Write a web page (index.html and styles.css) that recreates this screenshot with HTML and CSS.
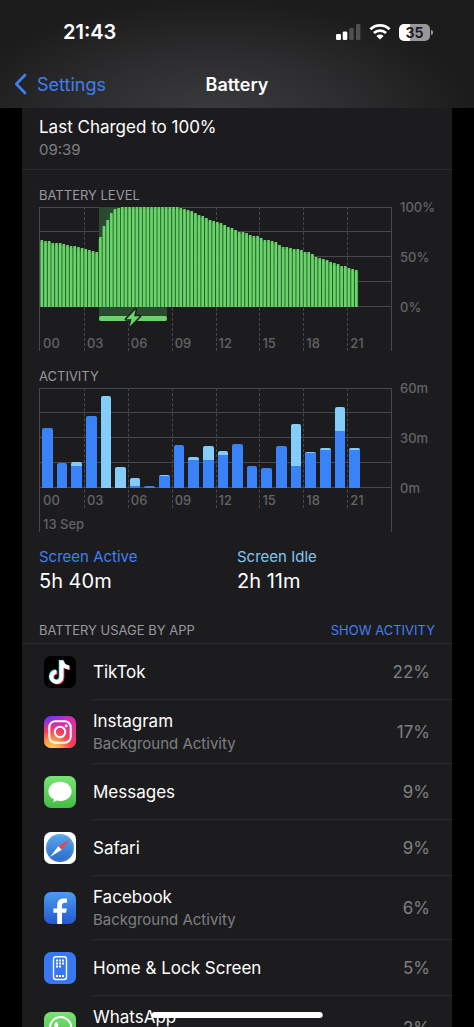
FILE: index.html
```html
<!DOCTYPE html>
<html lang="en">

<head>
    <meta charset="UTF-8">
    <meta name="viewport" content="width=device-width, initial-scale=1.0">
    <title>Battery</title>
    <link rel="stylesheet" href="styles.css">
</head>

<body>
    <div class="screen">
        <header class="header">
            <div class="status-bar">
                <span class="time">21:43</span>
                <div class="status-icons">
                    <svg width="25" height="16" viewBox="0 0 25 16" fill="#fff">
                        <rect x="0" y="10" width="5" height="6" rx="1.3" />
                        <rect x="6.7" y="7.5" width="4.6" height="8.5" rx="1.3" />
                        <rect x="13.3" y="4" width="4.4" height="12" rx="1.3" opacity=".22" />
                        <rect x="20" y="0" width="4.4" height="16" rx="1.3" opacity=".22" />
                    </svg>
                    <svg width="22" height="16" viewBox="0 0 22 16" fill="none" stroke="#fff">
                        <path d="M1.4 5.3a13.8 13.8 0 0 1 19.2 0" stroke-width="2.8" />
                        <path d="M4.9 9a8.8 8.8 0 0 1 12.2 0" stroke-width="2.7" />
                        <path d="M11 15.6 7.4 12a5.1 5.1 0 0 1 7.2 0z" fill="#fff" stroke="none" />
                    </svg>
                    <div class="battery"><span class="battery-level">35</span></div>
                </div>
            </div>
            <nav class="nav-bar">
                <a href="#" class="back">
                    <svg width="13" height="22" viewBox="0 0 13 22" fill="none" stroke="currentColor" stroke-width="2.7"
                        stroke-linecap="round" stroke-linejoin="round">
                        <path d="M11 2 2.3 11 11 20" />
                    </svg>
                    Settings
                </a>
                <h1>Battery</h1>
            </nav>
        </header>

        <main class="card">
            <section class="last-charge">
                <p class="last-title">Last Charged to 100%</p>
                <p class="sub-text">09:39</p>
            </section>

            <section class="chart-section">
                <h2>BATTERY LEVEL</h2>
                <div class="chart">
                    <div class="frame">
                        <div class="lines"></div>
                        <div class="hours">
                            <span>00</span><span>03</span><span>06</span><span>09</span><span>12</span><span>15</span><span>18</span><span>21</span>
                        </div>
                        <div class="charging">
                            <svg class="bolt" width="18" height="20" viewBox="0 0 18 20">
                                <path d="M11.6 1.5 2.2 11.300h5.300l-1.900 7.200L15.800 8.200h-5.700z" fill="#6ad36a" stroke="#1c1c1e" stroke-width="3" stroke-linejoin="round" paint-order="stroke" />
                            </svg>
                        </div>
                        <svg class="level-bars" id="levelBars" viewBox="0 0 96 100" preserveAspectRatio="none"></svg>
                    </div>
                    <div class="scale"><span>100%</span><span>50%</span><span>0%</span></div>
                </div>
            </section>

            <section class="chart-section">
                <h2>ACTIVITY</h2>
                <div class="chart">
                    <div class="frame">
                        <div class="lines"></div>
                        <div class="hours hours-short">
                            <span>00</span><span>03</span><span>06</span><span>09</span><span>12</span><span>15</span><span>18</span><span>21</span>
                        </div>
                        <div class="activity-bars" id="activityBars"></div>
                        <p class="date">13 Sep</p>
                    </div>
                    <div class="scale"><span>60m</span><span>30m</span><span>0m</span></div>
                </div>
            </section>

            <section class="totals">
                <div>
                    <p class="total-label active-color">Screen Active</p>
                    <p class="total-value">5h 40m</p>
                </div>
                <div>
                    <p class="total-label idle-color">Screen Idle</p>
                    <p class="total-value">2h 11m</p>
                </div>
            </section>

            <section>
                <div class="list-header">
                    <h2>BATTERY USAGE BY APP</h2>
                    <button type="button" class="link-btn">SHOW ACTIVITY</button>
                </div>
                <ul class="app-list">
                    <li>
                        <svg class="app-icon" viewBox="0 0 32 32">
                            <rect width="32" height="32" rx="7" fill="#000" />
                            <g fill="none" stroke-width="4">
                                <path d="M17.500 4.500v16.600a5 5 0 1 1-5-5.200M17.500 4.500c.5 4 3.400 6.800 7.700 7" stroke="#40e5df" transform="translate(-.8 -.6)" />
                                <path d="M17.500 4.500v16.600a5 5 0 1 1-5-5.200M17.500 4.500c.5 4 3.400 6.800 7.700 7" stroke="#f33b5c" transform="translate(.9 .7)" />
                                <path d="M17.500 4.500v16.600a5 5 0 1 1-5-5.200M17.500 4.500c.5 4 3.400 6.800 7.700 7" stroke="#fff" />
                            </g>
                        </svg>
                        <div class="app-row">
                            <div><p class="app-name">TikTok</p></div>
                            <span class="percent">22%</span>
                        </div>
                    </li>
                    <li class="tall">
                        <svg class="app-icon" viewBox="0 0 32 32">
                            <defs>
                                <linearGradient id="instaTop" x1=".1" y1="0" x2=".9" y2="1">
                                    <stop offset="0" stop-color="#6a35ee" />
                                    <stop offset=".4" stop-color="#d52cb4" />
                                    <stop offset="1" stop-color="#f53a62" />
                                </linearGradient>
                                <radialGradient id="instaGlow" cx=".25" cy="1.05" r=".95">
                                    <stop offset="0" stop-color="#ffd65a" />
                                    <stop offset=".3" stop-color="#ffa443" />
                                    <stop offset=".65" stop-color="#fa4250" stop-opacity=".8" />
                                    <stop offset="1" stop-color="#e62e90" stop-opacity="0" />
                                </radialGradient>
                            </defs>
                            <rect width="32" height="32" rx="7" fill="url(#instaTop)" />
                            <rect width="32" height="32" rx="7" fill="url(#instaGlow)" />
                            <g fill="none" stroke="#fff" stroke-width="2">
                                <rect x="5.300" y="5.300" width="21.400" height="21.400" rx="6" />
                                <circle cx="16" cy="16" r="5.200" />
                            </g>
                            <circle cx="22.200" cy="9.800" r="1.500" fill="#fff" />
                        </svg>
                        <div class="app-row">
                            <div>
                                <p class="app-name">Instagram</p>
                                <p class="sub-text">Background Activity</p>
                            </div>
                            <span class="percent">17%</span>
                        </div>
                    </li>
                    <li>
                        <svg class="app-icon" viewBox="0 0 32 32">
                            <defs>
                                <linearGradient id="green" x1="0" y1="0" x2="0" y2="1">
                                    <stop offset="0" stop-color="#7be276" />
                                    <stop offset="1" stop-color="#43bd43" />
                                </linearGradient>
                            </defs>
                            <rect width="32" height="32" rx="7" fill="url(#green)" />
                            <path d="M16 5.800c6.500 0 11.600 4.200 11.600 9.600S22.500 25 16 25c-1.200 0-2.300-.1-3.300-.4-1.100.9-2.300 1.400-4 1.500.8-.9 1.300-1.700 1.400-2.700C6.600 21.700 4.400 18.800 4.400 15.400c0-5.400 5.100-9.600 11.600-9.600z" fill="#fff" />
                        </svg>
                        <div class="app-row">
                            <div><p class="app-name">Messages</p></div>
                            <span class="percent">9%</span>
                        </div>
                    </li>
                    <li>
                        <svg class="app-icon" viewBox="0 0 32 32">
                            <defs>
                                <linearGradient id="compass" x1="0" y1="0" x2="0" y2="1">
                                    <stop offset="0" stop-color="#55a9ed" />
                                    <stop offset="1" stop-color="#2c68c9" />
                                </linearGradient>
                            </defs>
                            <rect width="32" height="32" rx="7" fill="#fff" />
                            <circle cx="16" cy="16" r="14" fill="url(#compass)" />
                            <circle cx="16" cy="16" r="12.600" fill="none" stroke="#a9d2f6" stroke-width="1" stroke-dasharray=".4 1.250" opacity=".7" />
                            <path d="M26 7 14.300 14.200l3.400 3.600z" fill="#e9464b" />
                            <path d="M6 25 14.300 14.200l3.400 3.600z" fill="#fff" />
                        </svg>
                        <div class="app-row">
                            <div><p class="app-name">Safari</p></div>
                            <span class="percent">9%</span>
                        </div>
                    </li>
                    <li class="tall">
                        <svg class="app-icon" viewBox="0 0 32 32">
                            <defs>
                                <linearGradient id="fbBlue" x1="0" y1="0" x2="0" y2="1">
                                    <stop offset="0" stop-color="#4a9df0" />
                                    <stop offset="1" stop-color="#2457cf" />
                                </linearGradient>
                            </defs>
                            <rect width="32" height="32" rx="7" fill="url(#fbBlue)" />
                            <path d="M13.200 32V20.800H9.400v-4.300h3.800v-3.400c0-4.400 2.300-6.700 6.300-6.700 1.300 0 2.500.1 3.500.3v4h-2.200c-2 0-2.800 1-2.800 2.800v3h4.800l-.8 4.300h-4V32z" fill="#fff" />
                        </svg>
                        <div class="app-row">
                            <div>
                                <p class="app-name">Facebook</p>
                                <p class="sub-text">Background Activity</p>
                            </div>
                            <span class="percent">6%</span>
                        </div>
                    </li>
                    <li>
                        <svg class="app-icon" viewBox="0 0 32 32">
                            <rect width="32" height="32" rx="7" fill="#3877f4" />
                            <rect x="9.500" y="4.700" width="13" height="22.800" rx="2.500" fill="none" stroke="#fff" stroke-width="1.400" />
                            <g stroke="#fff" stroke-width="2" stroke-dasharray="2 1">
                                <path d="M12 8.500h8M12 11.500h8M12 14.500h5M12 24h8" />
                            </g>
                        </svg>
                        <div class="app-row">
                            <div><p class="app-name">Home &amp; Lock Screen</p></div>
                            <span class="percent">5%</span>
                        </div>
                    </li>
                    <li class="tall">
                        <svg class="app-icon" viewBox="0 0 32 32">
                            <rect width="32" height="32" rx="7" fill="url(#green)" />
                            <path d="M6 26.500 7.500 21a10.600 10.600 0 1 1 4 3.900z" fill="none" stroke="#fff" stroke-width="2" />
                            <path d="M11.500 10.600c.6-.7 1.700-.6 2 0l1 2.400c.2.600-.9 1.500-.9 1.900.8 1.600 2 2.700 3.700 3.400.5.100 1.200-1.300 1.700-1.200l2.400 1.200c.5.300.1 2-.9 2.600-3.200 2-10.600-4-10.100-8 .1-.9.500-1.700 1.100-2.300z" fill="#fff" />
                        </svg>
                        <div class="app-row">
                            <div>
                                <p class="app-name">WhatsApp</p>
                                <p class="sub-text">Background Activity</p>
                            </div>
                            <span class="percent">2%</span>
                        </div>
                    </li>
                </ul>
            </section>
        </main>
        <div class="home-indicator"></div>
    </div>
    <script src="main.js"></script>
</body>

</html>
```
FILE: styles.css
```css
* {
    box-sizing: border-box;
}

body {
    margin: 0;
    background-color: #000;
    color: #fff;
    font-family: Inter, "Liberation Sans", sans-serif;
}

h1,
h2,
p,
ul {
    margin: 0;
    padding: 0;
}

.screen {
    display: flex;
    flex-direction: column;
    height: 100vh;
    overflow: hidden;
    position: relative;
}

/* header */
.header {
    flex: none;
    background: radial-gradient(ellipse at 45% 110%, #3c3c3e 0%, #2e2e30 35%, #1c1c1d 70%);
}

.status-bar {
    display: flex;
    justify-content: space-between;
    align-items: center;
    height: 60px;
    padding: 4px 44px 0 63px;
}

.time {
    font-size: 20px;
    font-weight: 600;
}

.status-icons {
    display: flex;
    align-items: center;
    gap: 8px;
}

.battery {
    position: relative;
    width: 31px;
    height: 17px;
    border-radius: 5px;
    background: linear-gradient(90deg, #fff 35%, #98989a 35%);
    color: #1c1c1e;
    text-align: center;
}

.battery::after {
    content: "";
    position: absolute;
    right: -3px;
    top: 6px;
    width: 2px;
    height: 5px;
    border-radius: 0 2px 2px 0;
    background-color: #98989a;
}

.battery-level {
    display: block;
    font-size: 14px;
    line-height: 17px;
    font-weight: 700;
}

.nav-bar {
    display: grid;
    grid-template-columns: 1fr auto 1fr;
    align-items: center;
    height: 48px;
    padding: 0 14px;
}

.back {
    display: flex;
    align-items: center;
    gap: 10px;
    color: #3f7ff0;
    font-size: 18px;
    text-decoration: none;
}

h1 {
    font-size: 18px;
    font-weight: 600;
}

/* card */
.card {
    flex: 1;
    min-height: 0;
    overflow: hidden;
    margin: 0 22px;
    background-color: #1c1c1e;
}

.last-charge {
    padding: 7px 17px 8px;
    border-bottom: 1px solid #2c2c2e;
}

.last-title,
.app-name {
    font-size: 17px;
    line-height: 24px;
}

.sub-text {
    color: #7f7f83;
    font-size: 15px;
    line-height: 22px;
}

h2 {
    color: #98989d;
    font-size: 13px;
    line-height: 18px;
    font-weight: 400;
}

/* charts */
.chart-section {
    padding: 16px 16px 0 17px;
}

.chart {
    display: grid;
    grid-template-columns: 1fr 44px;
    margin-top: 3px;
}

.frame {
    display: grid;
    grid-template-rows: 100px 44px;
    border-left: 1px solid #48484a;
    border-right: 1px solid #48484a;
}

.lines {
    grid-area: 1 / 1;
    border-top: 1px solid #48484a;
    background: repeating-linear-gradient(0deg, #48484a 0 1px, transparent 1px 25px);
}

.hours {
    grid-area: 1 / 1 / 3 / 2;
    display: grid;
    grid-template-columns: repeat(8, 1fr);
    color: #636366;
    font-size: 13px;
    font-weight: 500;
    line-height: 16px;
}

.hours span {
    display: flex;
    align-items: flex-end;
    padding-left: 2px;
    border-left: 1px dashed #48484a;
}

.hours span:first-child {
    border-left-color: transparent;
}

.hours-short {
    margin-bottom: 24px;
}

.level-bars {
    grid-area: 1 / 1;
    position: relative;
    width: 100%;
    height: 100px;
}

.bar-back {
    fill: #2c7233;
}

.bar {
    fill: #6ad36a;
}

.charging {
    grid-area: 1 / 1 / 3 / 2;
    position: relative;
    height: 114px;
    background-color: #2a4a2f;
}

.charging::after {
    content: "";
    position: absolute;
    left: 0;
    right: 0;
    bottom: 0;
    height: 5px;
    border-radius: 2px;
    background-color: #6ad36a;
}

.bolt {
    position: absolute;
    z-index: 1;
    left: 50%;
    bottom: -7px;
    margin-left: -9px;
}

.activity-bars {
    grid-area: 1 / 1;
    display: grid;
    grid-template-columns: repeat(24, 1fr);
    align-items: end;
    height: 100px;
}

.activity-bar {
    margin: 0 2px;
    overflow: hidden;
    display: flex;
    align-items: flex-end;
    border-radius: 2px 2px 0 0;
    background-color: #84cdfb;
}

.activity-bar div {
    width: 100%;
    background-color: #3a82f7;
}

.date {
    grid-area: 2 / 1;
    align-self: end;
    padding-left: 3px;
    color: #636366;
    font-size: 13px;
    font-weight: 500;
    line-height: 16px;
}

.scale {
    display: flex;
    flex-direction: column;
    justify-content: space-between;
    height: 116px;
    margin-top: -8px;
    padding-left: 8px;
    color: #636366;
    font-size: 13px;
    font-weight: 500;
    line-height: 16px;
}

/* totals */
.totals {
    display: grid;
    grid-template-columns: 1fr 1fr;
    padding: 15px 17px 0;
}

.total-label {
    font-size: 15px;
    line-height: 20px;
}

.total-value {
    font-size: 20px;
    line-height: 28px;
}

.active-color {
    color: #4080f0;
}

.idle-color {
    color: #84c8f0;
}

/* app list */
.list-header {
    display: flex;
    justify-content: space-between;
    align-items: center;
    padding: 26px 17px 4px;
    border-bottom: 1px solid #2c2c2e;
}

.link-btn {
    padding: 0;
    border: none;
    background: none;
    color: #4080f0;
    font-family: inherit;
    font-size: 13px;
    line-height: 18px;
    cursor: pointer;
}

.app-list {
    list-style: none;
}

.app-list li {
    display: flex;
    align-items: center;
    gap: 17px;
    height: 56px;
    padding-left: 22px;
}

.app-list li.tall {
    height: 64px;
}

.app-icon {
    flex: none;
    width: 32px;
    height: 32px;
}

.app-row {
    flex: 1;
    display: flex;
    justify-content: space-between;
    align-items: center;
    align-self: stretch;
    padding-right: 22px;
    border-bottom: 1px solid #2c2c2e;
}

.percent {
    color: #7f7f83;
    font-size: 17px;
}

.home-indicator {
    position: absolute;
    left: 50%;
    bottom: 9px;
    width: 36%;
    height: 6px;
    border-radius: 3px;
    background-color: #fff;
    transform: translateX(-50%);
}
```
FILE: main.js
```javascript
// battery level, one value per 15 minutes
var levels = [
    67, 66, 66, 64, 64, 64, 63, 62, 61, 61, 60, 59, 58, 57, 56, 55,
    70, 81, 87, 94, 98, 99, 100, 100, 100, 100, 100, 100, 100, 100, 100, 100,
    100, 100, 100, 100, 100, 100, 99, 98, 97, 96, 94, 92, 91, 89, 87, 86,
    85, 84, 82, 80, 79, 77, 75, 75, 74, 72, 71, 71, 69, 67, 67, 66,
    65, 62, 60, 60, 59, 58, 58, 57, 55, 55, 53, 50, 49, 48, 47, 45,
    44, 43, 41, 41, 39, 38, 37
];

// charging period, in 15 minute slots
var charge = { from: 16, to: 34.7 };

// minutes per hour: [screen active, total]
var activity = [
    [36, 36], [15, 15], [13, 15.5], [43, 43], [0, 55.5], [0, 12.5],
    [1, 6], [1, 1], [7, 8], [26, 26], [17, 18.5], [17, 25],
    [20, 22], [26.5, 26.5], [13, 13], [12, 12], [25, 25], [13, 38.5],
    [21, 21.5], [23, 24], [34, 48.5], [23, 24]
];

function addRect(svg, name, x, width, height) {
    var rect = document.createElementNS('http://www.w3.org/2000/svg', 'rect');
    rect.setAttribute('class', name);
    rect.setAttribute('x', x);
    rect.setAttribute('y', 100 - height);
    rect.setAttribute('width', width);
    rect.setAttribute('height', height);
    svg.appendChild(rect);
}

var levelBars = document.getElementById('levelBars');
levels.forEach(function (level, i) {
    addRect(levelBars, 'bar-back', i, 1, level - 2);
    addRect(levelBars, 'bar', i + 0.15, 0.72, level);
});

var charging = document.querySelector('.charging');
charging.style.marginLeft = charge.from / 96 * 100 + '%';
charging.style.width = (charge.to - charge.from) / 96 * 100 + '%';

var activityBars = document.getElementById('activityBars');
activity.forEach(function (item) {
    var bar = document.createElement('div');
    var active = document.createElement('div');
    bar.className = 'activity-bar';
    bar.style.height = item[1] / 60 * 100 + '%';
    active.style.height = item[0] / item[1] * 100 + '%';
    bar.appendChild(active);
    activityBars.appendChild(bar);
});
```
